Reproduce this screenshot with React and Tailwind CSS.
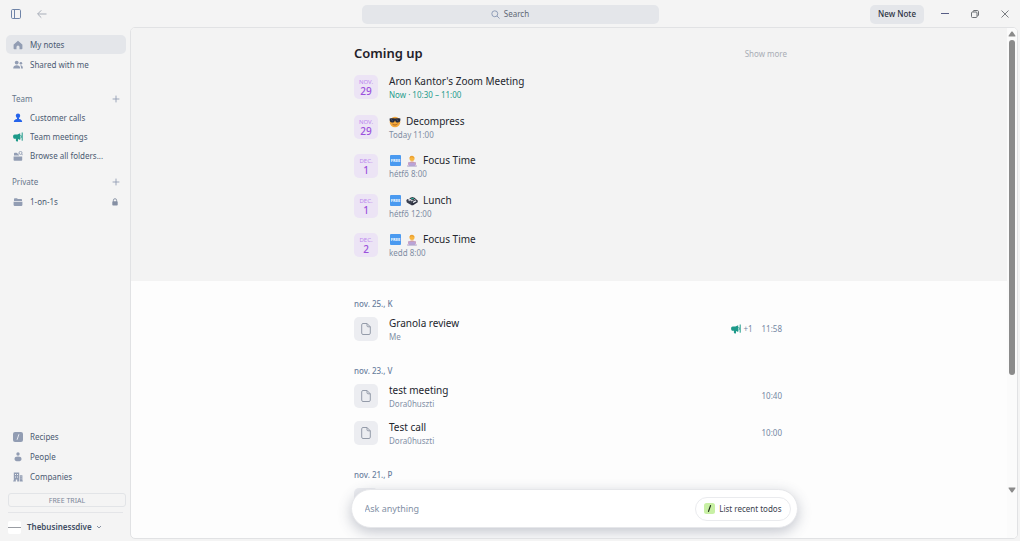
import React, { useState } from 'react'
import clsx from 'clsx'

const teamFolders = [
  { id: 'customer-calls', label: 'Customer calls', icon: PersonIcon, color: 'text-[#2463eb]' },
  { id: 'team-meetings', label: 'Team meetings', icon: MegaphoneIcon, color: 'text-[#1d9a8a]' },
  { id: 'browse', label: 'Browse all folders...', icon: FolderSearchIcon, color: 'text-[#929db3]' },
]

const libraryLinks = [
  { id: 'recipes', label: 'Recipes', icon: RecipeIcon },
  { id: 'people', label: 'People', icon: PeopleIcon },
  { id: 'companies', label: 'Companies', icon: BuildingIcon },
]

// Upcoming events, grouped by calendar day
const upcomingDays = [
  {
    month: 'NOV.',
    day: '29',
    events: [
      { title: "Aron Kantor's Zoom Meeting", time: 'Now · 10:30 – 11:00', live: true },
      { title: 'Decompress', time: 'Today 11:00', emoji: [SunglassesEmoji] },
    ],
  },
  {
    month: 'DEC.',
    day: '1',
    events: [
      { title: 'Focus Time', time: 'hétfő 8:00', emoji: [FreeEmoji, LaptopEmoji] },
      { title: 'Lunch', time: 'hétfő 12:00', emoji: [FreeEmoji, BentoEmoji] },
    ],
  },
  {
    month: 'DEC.',
    day: '2',
    events: [{ title: 'Focus Time', time: 'kedd 8:00', emoji: [FreeEmoji, LaptopEmoji] }],
  },
]

const noteGroups = [
  { date: 'nov. 25., K', notes: [{ title: 'Granola review', owner: 'Me', time: '11:58', shared: '+1' }] },
  {
    date: 'nov. 23., V',
    notes: [
      { title: 'test meeting', owner: 'Dora0huszti', time: '10:40' },
      { title: 'Test call', owner: 'Dora0huszti', time: '10:00' },
    ],
  },
  { date: 'nov. 21., P', notes: [{ title: '', owner: '', time: '' }] },
]

/* Icons */

function HomeIcon({ className }) {
  return (
    <svg viewBox="0 0 10 10" className={className} fill="currentColor" aria-hidden="true">
      <path d="M5 .7 1 4.2c-.3.2-.4.5-.4.8v3.500c0 .5.300.8.800.8h2.100V6.900a1.500 1.500 0 0 1 3 0v2.400h2.100c.5 0 .8-.3.8-.8V5c0-.3-.1-.6-.4-.8z" />
    </svg>
  )
}

function SharedIcon({ className }) {
  return (
    <svg viewBox="0 0 10 10" className={className} fill="currentColor" aria-hidden="true">
      <circle cx="3.700" cy="2.600" r="1.900" />
      <path d="M.2 8.400C.2 6.500 1.700 5.300 3.700 5.300s3.500 1.200 3.500 3.100z" />
      <circle cx="7.900" cy="3.200" r="1.300" />
      <path d="M7.300 5.300c1.500-.2 2.600 1 2.600 3.100H8.100c0-1.200-.2-2.200-.8-3.100z" />
    </svg>
  )
}

function PersonIcon({ className }) {
  return (
    <svg viewBox="0 0 10 10" className={className} fill="currentColor" aria-hidden="true">
      <circle cx="5" cy="2.800" r="2.200" />
      <path d="M4 4.500h2v1.400c1.900.300 3.200 1.200 3.200 3.100H.8c0-1.900 1.300-2.800 3.200-3.100z" />
    </svg>
  )
}

function PeopleIcon({ className }) {
  return (
    <svg viewBox="0 0 10 10" className={className} fill="currentColor" aria-hidden="true">
      <circle cx="5" cy="2" r="1.700" />
      <ellipse cx="5" cy="6.900" rx="3.500" ry="2.300" />
    </svg>
  )
}

function MegaphoneIcon({ className }) {
  return (
    <svg viewBox="0 0 10 10" className={className} fill="currentColor" aria-hidden="true">
      <path d="M7.200 1.200v6.900L5 7v2c0 .4-.3.600-.7.500l-1-.3c-.3-.1-.4-.3-.4-.6V6.800H1.700C.7 6.800.1 5.900.1 4.700s.6-2.100 1.600-2.100h2.700z" />
      <path d="M9.200.9v7.400M7.700 3.200c.9.500.9 2.500 0 3" fill="none" stroke="currentColor" strokeWidth="1" strokeLinecap="round" />
    </svg>
  )
}

function FolderIcon({ className }) {
  return (
    <svg viewBox="0 0 10 10" className={className} fill="currentColor" aria-hidden="true">
      <path d="M1 4V2c0-.5.300-.8.800-.8h2c.4 0 .7.300 1 .8h3.500c.4 0 .7.300.700.700V4z" />
      <path d="M.6 4.700h8.800v3.400c0 .5-.3.800-.8.800H1.400c-.5 0-.8-.3-.8-.8z" />
    </svg>
  )
}

function FolderSearchIcon({ className }) {
  return (
    <svg viewBox="0 0 10 10" className={className} fill="currentColor" aria-hidden="true">
      <path d="M1 4.600V2.600c0-.5.300-.8.800-.8h1.500c.5 0 .7.700 1.200.8h.8c0 .8.300 1.500.9 2z" />
      <path d="M.6 5.400h8.600v3.500c0 .5-.3.800-.8.800H1.400c-.5 0-.8-.3-.8-.8z" />
      <circle cx="7.500" cy="1.900" r="1.500" fill="none" stroke="currentColor" strokeWidth=".9" />
      <path d="m8.600 3 1.200 1.300" stroke="currentColor" strokeWidth=".9" />
    </svg>
  )
}

function RecipeIcon({ className }) {
  return (
    <svg viewBox="0 0 10 10" className={className} aria-hidden="true">
      <rect width="10" height="10" rx="2" fill="currentColor" />
      <path d="M5.800 2.600 4.200 7.400" stroke="#eef1f6" strokeWidth=".9" strokeLinecap="round" />
    </svg>
  )
}

function BuildingIcon({ className }) {
  return (
    <svg viewBox="0 0 10 10" className={className} fill="currentColor" aria-hidden="true">
      <path fillRule="evenodd" d="M.8.600h5.400v8.800H4.200V7.400H2.800v2H.2V8.500h.6zM2 2v1h1V2zm2 0v1h1V2zM2 4.400v1h1v-1zm2 0v1h1v-1z" />
      <path fillRule="evenodd" d="M6.800 3.200h2.600v5.300h.4v.9h-3zM7.600 4.400v.9h.9v-.9zm0 2v.9h.9v-.9z" />
    </svg>
  )
}

function LockIcon({ className }) {
  return (
    <svg viewBox="0 0 8 8" className={className} aria-hidden="true">
      <path d="M2.400 3.800V2.300a1.600 1.600 0 0 1 3.200 0v1.500" fill="none" stroke="currentColor" strokeWidth=".9" />
      <rect x="1.300" y="3.300" width="5.400" height="4.200" rx=".8" fill="currentColor" />
    </svg>
  )
}

function PlusIcon({ className }) {
  return (
    <svg viewBox="0 0 8 8" className={className} stroke="currentColor" strokeWidth=".9" aria-hidden="true">
      <path d="M4 .6v6.800M.6 4h6.800" />
    </svg>
  )
}

function PanelIcon({ className }) {
  return (
    <svg viewBox="0 0 12 12" className={className} fill="none" stroke="currentColor" aria-hidden="true">
      <rect x="1.500" y="1.500" width="9" height="9" rx="1.200" />
      <path d="M4.500 1.500v9" />
    </svg>
  )
}

function ArrowLeftIcon({ className }) {
  return (
    <svg viewBox="0 0 12 10" className={className} fill="none" stroke="currentColor" aria-hidden="true">
      <path d="M10.500 5H1.800M5.300 1.300 1.600 5l3.700 3.700" />
    </svg>
  )
}

function SearchIcon({ className }) {
  return (
    <svg viewBox="0 0 10 10" className={className} fill="none" stroke="currentColor" aria-hidden="true">
      <circle cx="4.200" cy="4.200" r="3.300" />
      <path d="M6.700 6.700 9.500 9.500" />
    </svg>
  )
}

function PageIcon({ className }) {
  return (
    <svg viewBox="0 0 12 14" className={className} fill="none" stroke="currentColor" strokeLinejoin="round" aria-hidden="true">
      <path d="M7 1.500H3c-.8 0-1.300.5-1.300 1.300v8.400c0 .8.500 1.300 1.300 1.300h6c.8 0 1.300-.5 1.300-1.300V4.800z" />
      <path d="M7 1.500v2.300c0 .6.400 1 1 1h2.300" />
    </svg>
  )
}

/* Calendar emoji */

function SunglassesEmoji() {
  return (
    <svg viewBox="0 0 12 12" className="size-3" aria-hidden="true">
      <circle cx="6" cy="6" r="5.300" fill="#f5a93b" />
      <path d="M.6 2.600c2-.6 3.700-.5 5.400 0 1.700-.5 3.400-.6 5.400 0 .2 2.400-.6 4-2.500 4S6.500 5.600 6 4.200C5.500 5.600 5 6.600 3.100 6.600S.4 5 .6 2.600z" fill="#262a3c" />
      <path d="M2 3.400 3.800 5M7.600 3.400 9.400 5" stroke="#6f7890" strokeWidth=".6" />
      <path d="M3.800 8.400c1.500 1 3.100.9 4.500-.3" stroke="#8a4a20" strokeWidth=".7" fill="none" strokeLinecap="round" />
    </svg>
  )
}

function FreeEmoji() {
  return (
    <span className="flex w-3 justify-end">
      <span className="flex size-[11px] items-center justify-center overflow-hidden rounded-[1px] bg-[#4a9af0] text-[4px] leading-none font-bold text-white">
        FREE
      </span>
    </span>
  )
}

function LaptopEmoji() {
  return (
    <svg viewBox="0 0 12 12" className="size-3" aria-hidden="true">
      <path d="M2.600 10c0-2.600 1.200-3.600 3.400-3.600s3.400 1 3.400 3.600z" fill="#e58a4f" />
      <circle cx="6" cy="3.500" r="2.500" fill="#f7b53f" />
      <path d="M3.600 3.200C3.700 1.100 5.300.400 6.700.9c1.100.4 1.700 1.300 1.700 2.400-1.100-.3-2-.7-2.500-1.300-.5.700-1.300 1.100-2.300 1.200z" fill="#eba032" />
      <path d="M2 7.200h1.400v2.500H2zM8.600 7.200H10v2.500H8.600z" fill="#c9a0c4" />
      <rect x="3" y="7.200" width="6" height="3.600" rx=".6" fill="#b9a3d8" />
      <path d="M1.200 10.400h9.600v1H1.200z" fill="#a294c4" />
    </svg>
  )
}

function BentoEmoji() {
  return (
    <svg viewBox="0 0 12 12" className="size-3" aria-hidden="true">
      <path d="M.3 5.200 1.400 4 5.500 5.700 6 8.200v2.200L.8 7.600z" fill="#3a3f4e" />
      <path d="M3.200 3.300 6.400 2l3.400 1.300-3 2.200z" fill="#2b2f3d" />
      <path d="m4.600 3.600 2-.9 1.700.8-2 1z" fill="#35b39a" />
      <path d="M5.500 6.400 9.800 4l1.900 1.600v1.700L6.700 10.500 5.500 9.500z" fill="#2b2f3d" />
      <path d="m6.600 6.900 2.800-1.600 1.200.9-3.200 1.900z" fill="#e9edf2" />
      <path d="m1.800 5 1.200-.4 1.700.9-1.100.7z" fill="#b4bcc8" />
    </svg>
  )
}

/* Title bar */

const TitleBar = ({ onToggleSidebar }) => (
  <header className="grid h-[27px] shrink-0 grid-cols-[1fr_minmax(0,297px)_1fr] items-center pt-px">
    <div className="flex items-center gap-[14px] pl-[10px]">
      <button aria-label="Toggle sidebar" onClick={onToggleSidebar} className="text-[#6f84a8]">
        <PanelIcon className="size-3" />
      </button>
      <button aria-label="Back" className="text-[#a7adb8]">
        <ArrowLeftIcon className="h-[10px] w-3" />
      </button>
    </div>
    <button className="flex h-[19px] items-center justify-center gap-1 rounded-[5px] bg-[#e4e6ea] text-[8px] text-[#606774]">
      <SearchIcon className="size-[9px] text-[#8796b3]" />
      Search
    </button>
    <div className="flex items-center justify-end">
      <button className="mr-[6px] h-[19px] rounded-[5px] bg-[#e4e6ea] px-2 text-[8px] font-medium text-[#2b3242]">
        New Note
      </button>
      <button aria-label="Minimize" className="flex w-[30px] justify-center text-[#565d85]">
        <svg viewBox="0 0 8 8" className="size-2" stroke="currentColor">
          <path d="M0 3.500h8" />
        </svg>
      </button>
      <button aria-label="Restore" className="flex w-[30px] justify-center text-[#6d7075]">
        <svg viewBox="0 0 8 8" className="size-2" fill="none" stroke="currentColor">
          <rect x=".5" y="2" width="5.500" height="5.500" rx="1" />
          <path d="M2.200 1.800V1.300c0-.5.300-.8.800-.8h3.300c.7 0 1.200.5 1.200 1.200V5c0 .5-.3.800-.8.800h-.5" />
        </svg>
      </button>
      <button aria-label="Close" className="flex w-[30px] justify-center text-[#6d7075]">
        <svg viewBox="0 0 8 8" className="size-2" stroke="currentColor" strokeWidth=".9">
          <path d="m.5.5 7 7M7.500.5l-7 7" />
        </svg>
      </button>
    </div>
  </header>
)

/* Sidebar */

const NavItem = ({ icon: Icon, label, color = 'text-[#929db3]', active, children }) => (
  <a
    href="#"
    aria-current={active ? 'page' : undefined}
    className={clsx('flex h-[19px] items-center rounded-[5px] px-[7px] text-[8px] text-[#4b5a72]', active && 'bg-[#e4e6ea]')}
  >
    <Icon className={clsx('mr-[7px] size-[10px] shrink-0', color)} />
    <span className="grow truncate">{label}</span>
    {children}
  </a>
)

const SectionHeader = ({ title }) => (
  <div className="flex h-[19px] items-center justify-between px-[6px]">
    <h2 className="text-[8px] text-[#66748a]">{title}</h2>
    <button aria-label={`Add to ${title}`} className="text-[#929db3]">
      <PlusIcon className="size-2" />
    </button>
  </div>
)

const Sidebar = () => (
  <aside className="flex w-[130px] shrink-0 flex-col pt-2 pr-1 pl-[6px]">
    <nav className="flex flex-col gap-px">
      <NavItem icon={HomeIcon} label="My notes" active />
      <NavItem icon={SharedIcon} label="Shared with me" />
    </nav>

    <section className="mt-[15px]">
      <SectionHeader title="Team" />
      {teamFolders.map((folder) => (
        <NavItem key={folder.id} icon={folder.icon} label={folder.label} color={folder.color} />
      ))}
    </section>

    <section className="mt-[7px] flex flex-col gap-px">
      <SectionHeader title="Private" />
      <NavItem icon={FolderIcon} label="1-on-1s">
        <LockIcon className="size-2 text-[#858fa3]" />
      </NavItem>
    </section>

    <nav className="mt-auto flex flex-col gap-px">
      {libraryLinks.map((link) => (
        <NavItem key={link.id} icon={link.icon} label={link.label} />
      ))}
    </nav>

    <button className="mt-[7px] ml-[2px] h-[14px] rounded-[3px] border border-[#e2e4e7] text-[7px] leading-none text-[#7c8799]">
      FREE TRIAL
    </button>
    <div className="mt-[5px] mr-[3px] ml-[2px] border-t border-[#e4e5e8]" />
    <button className="mt-[7px] mb-[7px] ml-[2px] flex h-[14px] items-center text-[8px] font-semibold text-[#414d63]">
      <span className="mr-[6px] flex size-[13px] items-center rounded-[2px] bg-white">
        <span className="h-px w-full bg-[#9a9da3]" />
      </span>
      Thebusinessdive
      <svg viewBox="0 0 6 6" className="ml-1 size-[6px]" fill="none" stroke="#7c8799" strokeWidth=".9">
        <path d="m1 2 2 2 2-2" />
      </svg>
    </button>
  </aside>
)

/* Main content */

const EventRow = ({ month, day, event }) => (
  <li className="flex h-6 items-center gap-[11px]">
    <div className="flex size-6 shrink-0 flex-col items-center justify-center rounded-[5px] bg-[#ece4f5]">
      <span className="text-[6px] leading-[7px] text-[#bb86ee]">{month}</span>
      <span className="text-[10px] leading-[10px] font-medium text-[#9b51dc]">{day}</span>
    </div>
    <div className="pt-[2px]">
      <h3 className="flex h-[13px] items-center gap-[5px] text-[10px] leading-[13px] text-[#23262e]">
        {event.emoji?.map((Emoji, i) => (
          <Emoji key={i} />
        ))}
        {event.title}
      </h3>
      <p className={clsx('text-[8px] leading-[13px]', event.live ? 'text-[#1f9c8d]' : 'text-[#7f8da3]')}>{event.time}</p>
    </div>
  </li>
)

const ComingUp = () => (
  <section className="bg-[#f3f3f3] pt-[17px] pb-6 pl-[3px]">
    <div className="mx-auto max-w-[433px]">
      <div className="mb-[13px] flex h-[17px] items-center justify-between">
        <h1 className="text-[13px] leading-[17px] font-semibold text-[#1f2129]">Coming up</h1>
        <button className="text-[8px] text-[#a9adb5]">Show more</button>
      </div>
      <div className="flex flex-col gap-[15px]">
        {upcomingDays.map((group) => (
          <ul key={group.month + group.day} className="flex flex-col gap-4">
            {group.events.map((event) => (
              <EventRow key={event.time} month={group.month} day={group.day} event={event} />
            ))}
          </ul>
        ))}
      </div>
    </div>
  </section>
)

const NoteRow = ({ note }) => (
  <li className="flex h-6 items-center gap-[11px]">
    <div className="flex size-6 shrink-0 items-center justify-center rounded-[5px] bg-[#ecedf1] text-[#949ba9]">
      <PageIcon className="h-[14px] w-3" />
    </div>
    <div className="grow pt-[2px]">
      <h3 className="text-[10px] leading-[13px] text-[#23262e]">{note.title}</h3>
      <p className="text-[8px] leading-[13px] text-[#8290a6]">{note.owner}</p>
    </div>
    <div className="flex items-center text-[8px] text-[#7487a3]">
      {note.shared && (
        <>
          <MegaphoneIcon className="mr-[2px] size-[10px] text-[#1d9a8a]" />
          <span className="mr-[9px]">{note.shared}</span>
        </>
      )}
      <time>{note.time}</time>
    </div>
  </li>
)

const NotesList = () => (
  <section className="pt-[15px] pl-[3px]">
    <div className="mx-auto flex max-w-[433px] flex-col gap-[22px]">
      {noteGroups.map((group) => (
        <div key={group.date} className="pr-[5px]">
          <h2 className="mb-[5px] text-[8px] leading-4 font-medium text-[#6a7f9d]">{group.date}</h2>
          <ul className="flex flex-col gap-[13px]">
            {group.notes.map((note) => (
              <NoteRow key={note.title} note={note} />
            ))}
          </ul>
        </div>
      ))}
    </div>
  </section>
)

const ScrollTrack = () => (
  <div className="flex w-[10px] shrink-0 flex-col items-center bg-[#fbfbfb] pt-[3px] pb-[45px] text-[#8b8b8b]" aria-hidden="true">
    <svg viewBox="0 0 8 6" className="h-[6px] w-2" fill="currentColor">
      <path d="M3.300.8c.4-.5 1-.5 1.400 0l2.600 3.600c.4.500.1 1.100-.5 1.100H1.200c-.6 0-.9-.6-.5-1.100z" />
    </svg>
    <div className="mt-[3px] flex w-[6px] grow flex-col">
      <div className="h-3/4 rounded-full bg-[#8b8b8b]" />
    </div>
    <svg viewBox="0 0 8 6" className="h-[6px] w-2" fill="currentColor">
      <path d="M3.300 5.200c.4.500 1 .5 1.400 0l2.600-3.600C7.700 1.100 7.400.500 6.800.500H1.200c-.6 0-.9.600-.5 1.100z" />
    </svg>
  </div>
)

const AskBar = () => {
  const [question, setQuestion] = useState('')

  return (
    <form
      onSubmit={(e) => e.preventDefault()}
      className="absolute inset-x-0 bottom-[10px] mx-auto flex h-[39px] max-w-[447px] items-center rounded-full border border-[#e6e7ea] bg-white pr-[6px] pl-[13px] shadow-[0_4px_14px_rgba(60,70,95,0.3)]"
    >
      <input
        aria-label="Ask anything"
        placeholder="Ask anything"
        value={question}
        onChange={(e) => setQuestion(e.target.value)}
        className="min-w-0 grow bg-transparent text-[9px] text-[#23262e] outline-none placeholder:text-[#8390a5]"
      />
      <button type="button" className="flex h-6 shrink-0 items-center gap-1 rounded-full border border-[#eaebee] px-2 text-[8px] text-[#3c424e]">
        <svg viewBox="0 0 11 11" className="size-[11px]" aria-hidden="true">
          <rect width="11" height="11" rx="2.500" fill="#c8f0a4" />
          <path d="M6.500 2.600 4.500 8.400" stroke="#1d2b18" strokeWidth="1.200" strokeLinecap="round" />
        </svg>
        List recent todos
      </button>
    </form>
  )
}

const App = () => {
  const [showSidebar, setShowSidebar] = useState(true)

  return (
    <div className="flex h-screen flex-col overflow-hidden bg-[#f4f4f4] font-['Noto_Sans','Open_Sans',sans-serif]">
      <TitleBar onToggleSidebar={() => setShowSidebar(!showSidebar)} />
      <div className="flex min-h-0 grow">
        {showSidebar && <Sidebar />}
        <main className="relative mr-[2px] mb-[2px] flex min-w-0 grow overflow-hidden rounded-[5px] border border-[#e1e2e4] bg-[#fdfdfd]">
          <div className="min-w-0 grow overflow-hidden">
            <ComingUp />
            <NotesList />
          </div>
          <ScrollTrack />
          <AskBar />
        </main>
      </div>
    </div>
  )
}

export default App
